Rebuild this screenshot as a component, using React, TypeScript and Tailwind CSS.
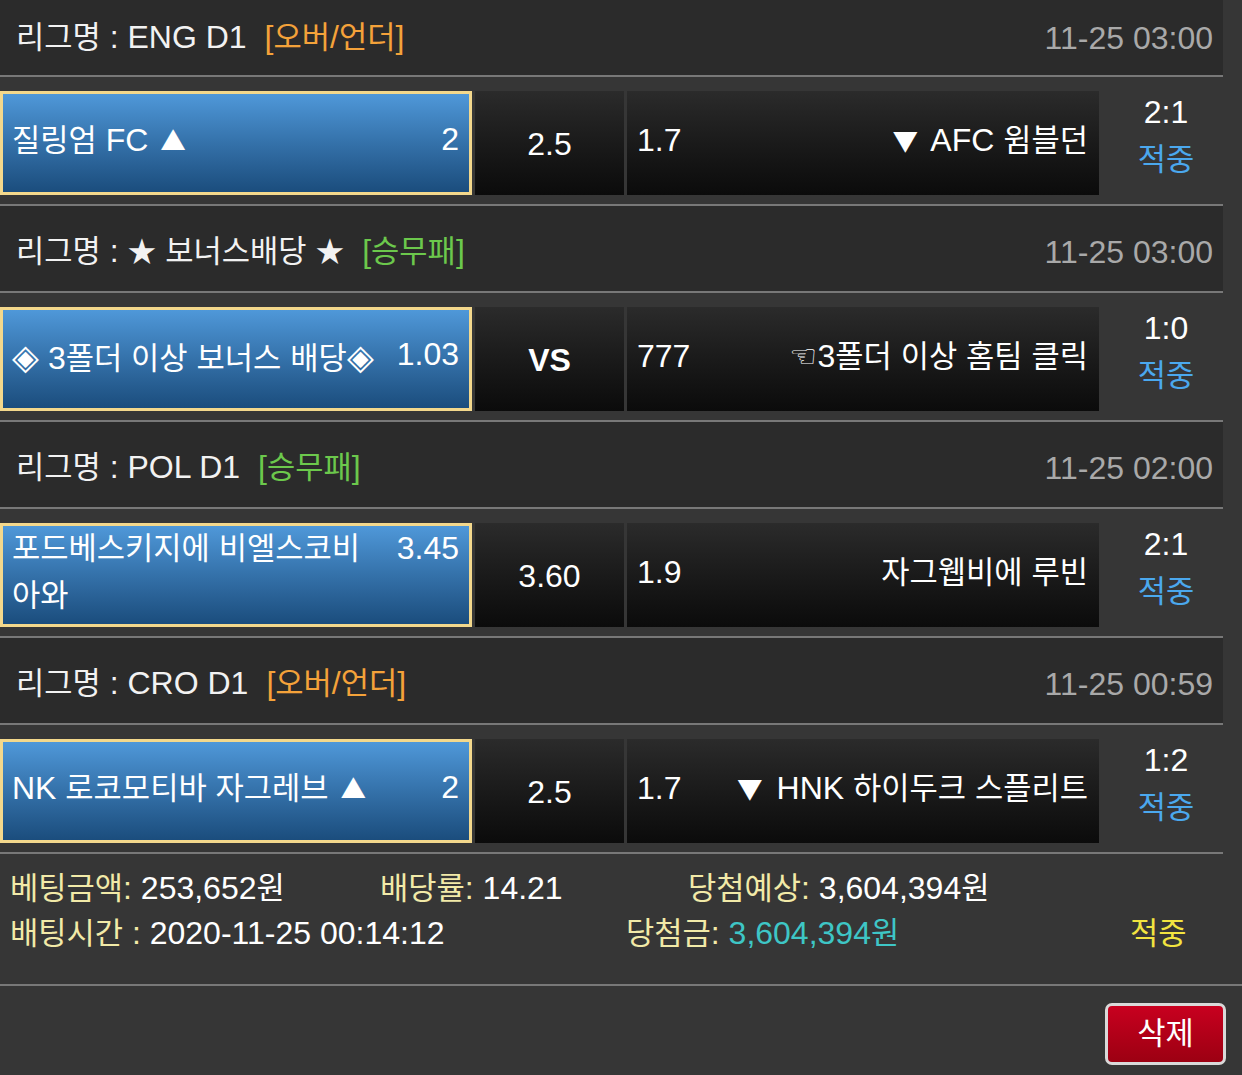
import React from "react";

const SPLIT = /([\u3131-\u318E\uAC00-\uD7A3]+|[▲▼◈★])/;
const IS_HANGUL = /^[\u3131-\u318E\uAC00-\uD7A3]+$/;

function T({ s }: { s: string }) {
  const parts = s.split(SPLIT);
  return (
    <>
      {parts.map((p, i) => {
        if (IS_HANGUL.test(p)) {
          return (
            <span key={i} className="text-[0.96em]">
              {p}
            </span>
          );
        }
        if (p === "▲") {
          return (
            <span key={i} className="ml-[3px] font-['Noto_Sans_CJK_KR',sans-serif] text-[0.8em]">
              {p}
            </span>
          );
        }
        if (p === "▼") {
          return (
            <span key={i} className="mr-[5px] font-['Noto_Sans_CJK_KR',sans-serif] text-[0.8em]">
              {p}
            </span>
          );
        }
        if (p === "◈") {
          return (
            <span key={i} className="font-['Noto_Sans_CJK_KR',sans-serif] text-[1.08em]">
              {p}
            </span>
          );
        }
        if (p === "★") {
          return (
            <span key={i} className="font-['Noto_Sans_CJK_KR',sans-serif] text-[0.9em]">
              {p}
            </span>
          );
        }
        return <React.Fragment key={i}>{p}</React.Fragment>;
      })}
    </>
  );
}

type Match = {
  league: string;
  tag: string;
  tagColor: "orange" | "green";
  date: string;
  home: React.ReactNode;
  homeOdds: string;
  mid: string;
  midBold?: boolean;
  awayOdds: string;
  away: React.ReactNode;
  score: string;
  first?: boolean;
};

const matches: Match[] = [
  {
    league: "리그명 : ENG D1",
    tag: "[오버/언더]",
    tagColor: "orange",
    date: "11-25 03:00",
    home: <T s="질링엄 FC ▲" />,
    homeOdds: "2",
    mid: "2.5",
    awayOdds: "1.7",
    away: <T s="▼ AFC 윔블던" />,
    score: "2:1",
    first: true,
  },
  {
    league: "리그명 : ★ 보너스배당 ★",
    tag: "[승무패]",
    tagColor: "green",
    date: "11-25 03:00",
    home: <T s="◈ 3폴더 이상 보너스 배당◈" />,
    homeOdds: "1.03",
    mid: "VS",
    midBold: true,
    awayOdds: "777",
    away: (
      <span>
        <span className="font-['DejaVu_Sans',sans-serif] text-[31px]">☜</span>
        <T s="3폴더 이상 홈팀 클릭" />
      </span>
    ),
    score: "1:0",
  },
  {
    league: "리그명 : POL D1",
    tag: "[승무패]",
    tagColor: "green",
    date: "11-25 02:00",
    home: <T s="포드베스키지에 비엘스코비 아와" />,
    homeOdds: "3.45",
    mid: "3.60",
    awayOdds: "1.9",
    away: <T s="자그웹비에 루빈" />,
    score: "2:1",
  },
  {
    league: "리그명 : CRO D1",
    tag: "[오버/언더]",
    tagColor: "orange",
    date: "11-25 00:59",
    home: <T s="NK 로코모티바 자그레브 ▲" />,
    homeOdds: "2",
    mid: "2.5",
    awayOdds: "1.7",
    away: <T s="▼ HNK 하이두크 스플리트" />,
    score: "1:2",
  },
];

function MatchBlock({ m }: { m: Match }) {
  return (
    <div>
      <div
        className={`${m.first ? "h-[77px]" : "h-[87px] pt-[6px]"} bg-[#2b2b2b] flex items-center justify-between pl-[16px] pr-[10px] border-b-2 border-[#787878]`}
      >
        <div className="text-[#f2f2f2]">
          <T s={m.league} />
          <span
            className={`ml-[18px] ${m.tagColor === "orange" ? "text-[#f4a23a]" : "text-[#6cc84c]"}`}
          >
            <T s={m.tag} />
          </span>
        </div>
        <div className="text-[#a9a9a9]">{m.date}</div>
      </div>
      <div className="h-[129px] flex items-start pt-[14px] border-b-2 border-[#787878]">
        <div className="w-[472px] h-[104px] border-[3px] border-[#f3d88c] bg-linear-to-b from-[#4f98d9] to-[#1b4d7d] flex items-center pl-[9px] pr-[10px] pb-[6px] text-white leading-[47px]">
          <div className="flex w-full items-start justify-between">
            <div className="flex-1 break-keep">{m.home}</div>
            <div className="shrink-0">{m.homeOdds}</div>
          </div>
        </div>
        <div
          className={`ml-[3px] w-[149px] h-[104px] bg-linear-to-b from-[#2b2b2b] to-[#0b0b0b] flex items-center justify-center text-white pt-[2px] ${m.midBold ? "font-bold" : ""}`}
        >
          {m.mid}
        </div>
        <div className="ml-[3px] w-[472px] h-[104px] bg-linear-to-b from-[#2b2b2b] to-[#0b0b0b] flex items-center justify-between pl-[10px] pr-[11px] pb-[6px] text-white">
          <div>{m.awayOdds}</div>
          <div>{m.away}</div>
        </div>
        <div className="flex-1 h-[104px] flex flex-col items-center justify-center pl-[10px] pb-[14px] leading-[47px]">
          <div className="text-white">{m.score}</div>
          <div className="text-[#4ba8ee]">
            <T s="적중" />
          </div>
        </div>
      </div>
    </div>
  );
}

export default function App() {
  return (
    <div className="w-[1242px] min-h-[1075px] bg-[#363636] font-['Liberation_Sans','Noto_Sans_CJK_KR',sans-serif] text-[32px] overflow-hidden">
      <div className="w-[1223px]">
        {matches.map((m, i) => (
          <MatchBlock key={i} m={m} />
        ))}
      </div>
      <div className="h-[132px] pt-[12px] border-b-2 border-[#787878] leading-[45px]">
        <div className="flex pl-[10px]">
          <div className="w-[370px]">
            <span className="text-[#f2eaa8]">
              <T s="베팅금액:" />
            </span>
            <span className="text-white">
              <T s=" 253,652원" />
            </span>
          </div>
          <div className="w-[308px]">
            <span className="text-[#f2eaa8]">
              <T s="배당률:" />
            </span>
            <span className="text-white"> 14.21</span>
          </div>
          <div>
            <span className="text-[#f2eaa8]">
              <T s="당첨예상:" />
            </span>
            <span className="text-white">
              <T s=" 3,604,394원" />
            </span>
          </div>
        </div>
        <div className="flex pl-[10px]">
          <div className="w-[616px]">
            <span className="text-[#f2eaa8]">
              <T s="배팅시간 :" />
            </span>
            <span className="text-white"> 2020-11-25 00:14:12</span>
          </div>
          <div className="w-[504px]">
            <span className="text-[#f2eaa8]">
              <T s="당첨금:" />
            </span>
            <span className="text-[#3ec6c6]">
              <T s=" 3,604,394원" />
            </span>
          </div>
          <div className="text-[#f2e440]">
            <T s="적중" />
          </div>
        </div>
      </div>
      <div className="flex justify-end pt-[17px] pr-[16px]">
        <button className="w-[121px] h-[62px] border-[3px] border-[#d9d9d9] rounded-[7px] bg-linear-to-b from-[#c8001f] to-[#9c0012] text-white text-[32px] flex items-center justify-center">
          <T s="삭제" />
        </button>
      </div>
    </div>
  );
}
